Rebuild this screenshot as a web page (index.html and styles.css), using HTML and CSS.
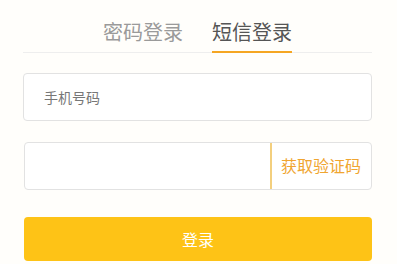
FILE: index.html
```html
<!DOCTYPE html>
<html lang="zh-CN">
<head>
<meta charset="utf-8">
<link rel="stylesheet" href="styles.css">
</head>
<body>
<div class="panel">
  <div class="tabs">
    <div class="tab">密码登录</div>
    <div class="tab active">短信登录</div>
  </div>
  <div class="field phone"><span class="placeholder">手机号码</span></div>
  <div class="field code">
    <span class="code-input"></span>
    <span class="send">获取验证码</span>
  </div>
  <div class="submit">登录</div>
</div>
</body>
</html>
```
FILE: styles.css
```css
html, body {
  margin: 0;
  padding: 0;
  background: #fffefb;
  font-family: "Noto Sans CJK SC", "Noto Sans", sans-serif;
}
.panel {
  width: 349px;
  margin-left: 23px;
  padding-top: 18px;
}
.tabs {
  display: flex;
  justify-content: center;
  gap: 29px;
  border-bottom: 1px solid #eeeeee;
}
.tab {
  font-size: 20px;
  line-height: 28px;
  color: #9a9a9a;
  padding-bottom: 5px;
  border-bottom: 2px solid transparent;
  margin-bottom: -1px;
}
.tab.active {
  color: #555555;
  border-bottom-color: #f5a623;
}
.field {
  box-sizing: border-box;
  height: 48px;
  background: #ffffff;
  border: 1px solid #e2e2e2;
  border-radius: 4px;
  display: flex;
  align-items: center;
}
.phone {
  margin-top: 20px;
  padding-left: 20px;
}
.placeholder {
  font-size: 14px;
  color: #777777;
}
.code {
  margin-top: 21px;
  margin-left: 1px;
  align-items: stretch;
}
.code-input {
  flex: 1;
}
.send {
  display: flex;
  align-items: center;
  margin: 0;
  padding: 0 10px 2px 9px;
  border-left: 2px solid #f3cf7e;
  font-size: 16px;
  color: #f0a530;
}
.submit {
  margin-top: 27px;
  margin-left: 1px;
  width: 348px;
  height: 44px;
  background: #fec316;
  border-radius: 4px;
  color: #ffffff;
  font-size: 16px;
  display: flex;
  align-items: center;
  justify-content: center;
}
```
